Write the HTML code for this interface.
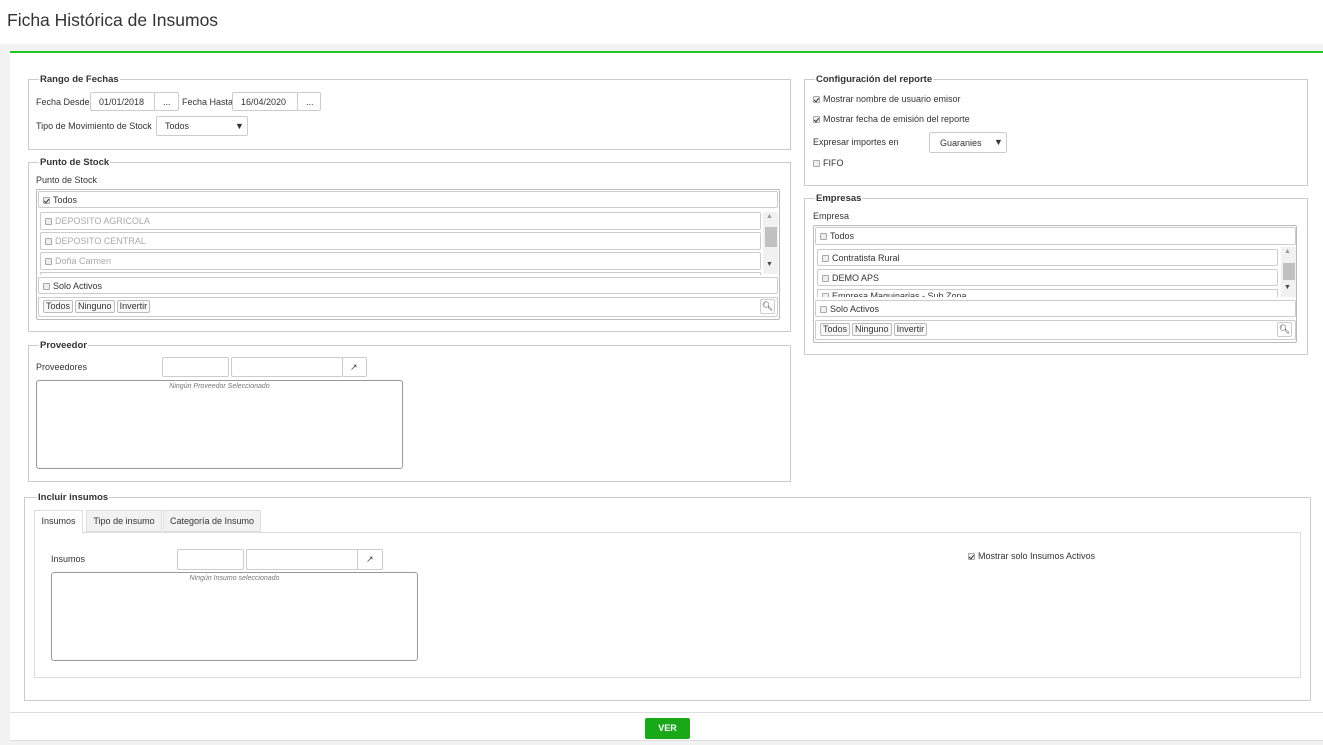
<!DOCTYPE html>
<html><head><meta charset="utf-8"><style>
*{box-sizing:border-box;margin:0;padding:0}
body{width:1323px;height:745px;background:#fff;font-family:"Liberation Sans",sans-serif;font-size:9px;color:#333;position:relative;overflow:hidden}
.a{position:absolute}
.fs{position:absolute;border:1px solid #ccc}
.lg{position:absolute;top:-6px;left:10px;background:#fff;font-weight:bold;font-size:9.5px;color:#333;padding:0 1px;line-height:11px}
.in{position:absolute;border:1px solid #ccc;border-radius:2px;background:#fff;font-size:9px;display:flex;align-items:center;padding-left:8px}
.cb{display:inline-block;width:7px;height:7px;border:1px solid #aaa;background:#eee;border-radius:1px;vertical-align:-1px;margin-right:3px;position:relative}
.cb.k::after{content:"";position:absolute;left:1px;top:0px;width:2px;height:4px;border:solid #333;border-width:0 1.3px 1.3px 0;transform:rotate(40deg)}
.row{position:absolute;border:1px solid #ccc;border-radius:2px;background:#fff;line-height:16px;padding-left:4px;font-size:9px}
.g{color:#aaa}
.btn{display:inline-block;border:1px solid #bbb;border-radius:2px;padding:0 2px;line-height:11px;margin-right:2px;font-size:9px;background:#f8f8f8}
</style></head><body>
<div class="a" style="left:7px;top:10px;font-size:17.5px;color:#333">Ficha Histórica de Insumos</div>
<div class="a" style="left:0;top:44px;width:1323px;height:701px;background:#f2f2f2"></div>
<div class="a" style="left:10px;top:51px;width:1313px;height:661px;background:#fff;border-top:2px solid #22c622"></div>
<div class="a" style="left:10px;top:712px;width:1313px;height:1px;background:#ddd"></div>
<div class="a" style="left:10px;top:713px;width:1313px;height:28px;background:#fff;border-bottom:1px solid #ddd"></div>
<div class="a" style="left:645px;top:718px;width:45px;height:21px;background:#18a818;border-radius:2px;color:#fff;font-weight:bold;text-align:center;line-height:21px;font-size:9px">VER</div>

<div class="fs" style="left:28px;top:79px;width:763px;height:71px"><div class="lg">Rango de Fechas</div></div>
<div class="a" style="left:36px;top:97px">Fecha Desde</div>
<div class="in" style="left:90px;top:92px;width:65px;height:19px">01/01/2018</div>
<div class="in" style="left:154px;top:92px;width:25px;height:19px">...</div>
<div class="a" style="left:182px;top:97px">Fecha Hasta</div>
<div class="in" style="left:232px;top:92px;width:66px;height:19px">16/04/2020</div>
<div class="in" style="left:297px;top:92px;width:24px;height:19px">...</div>
<div class="a" style="left:36px;top:121px">Tipo de Movimiento de Stock</div>
<div class="in" style="left:156px;top:116px;width:92px;height:20px">Todos<span class="a" style="left:78px;top:4px">▼</span></div>

<div class="fs" style="left:28px;top:162px;width:763px;height:170px"><div class="lg">Punto de Stock</div></div>
<div class="a" style="left:36px;top:175px">Punto de Stock</div>
<div class="a" style="left:36px;top:189px;width:744px;height:131px;border:1px solid #bbb;border-radius:2px"></div>
<div class="row" style="left:38px;top:191px;width:740px;height:17px"><span class="cb k"></span>Todos</div>
<div class="row g" style="left:40px;top:212px;width:721px;height:18px"><span class="cb"></span>DEPOSITO AGRICOLA</div>
<div class="row g" style="left:40px;top:232px;width:721px;height:18px"><span class="cb"></span>DEPOSITO CENTRAL</div>
<div class="row g" style="left:40px;top:252px;width:721px;height:18px"><span class="cb"></span>Doña Carmen</div>
<div class="a" style="left:40px;top:272px;width:721px;height:3px;border:1px solid #ccc;border-bottom:none"></div>
<div class="a" style="left:763px;top:212px;width:15px;height:62px;background:#f1f1f1"></div>
<div class="a" style="left:766px;top:213px;font-size:7px;color:#999">▲</div>
<div class="a" style="left:765px;top:227px;width:12px;height:20px;background:#c1c1c1"></div>
<div class="a" style="left:766px;top:261px;font-size:7px;color:#444">▼</div>
<div class="row" style="left:38px;top:277px;width:740px;height:17px"><span class="cb"></span>Solo Activos</div>
<div class="row" style="left:38px;top:297px;width:740px;height:20px;padding-top:2px;line-height:12px"><span class="btn">Todos</span><span class="btn">Ninguno</span><span class="btn">Invertir</span></div>
<div class="a" style="left:760px;top:299px;width:15px;height:15px;border:1px solid #ccc;border-radius:2px;text-align:center;font-size:9px;line-height:13px">&#x1F50D;&#xFE0E;</div>

<div class="fs" style="left:28px;top:345px;width:763px;height:137px"><div class="lg">Proveedor</div></div>
<div class="a" style="left:36px;top:362px">Proveedores</div>
<div class="in" style="left:162px;top:357px;width:67px;height:20px"></div>
<div class="in" style="left:231px;top:357px;width:112px;height:20px"></div>
<div class="in" style="left:342px;top:357px;width:25px;height:20px;padding-left:7px;color:#444">↗</div>
<div class="a" style="left:36px;top:380px;width:367px;height:89px;border:1px solid #999;border-radius:3px"></div>
<div class="a" style="left:36px;top:383px;width:367px;text-align:center;font-size:7px;font-style:italic;color:#777">Ningún Proveedor Seleccionado</div>

<div class="fs" style="left:804px;top:79px;width:504px;height:107px"><div class="lg">Configuración del reporte</div></div>
<div class="a" style="left:813px;top:94px"><span class="cb k"></span>Mostrar nombre de usuario emisor</div>
<div class="a" style="left:813px;top:114px"><span class="cb k"></span>Mostrar fecha de emisión del reporte</div>
<div class="a" style="left:813px;top:137px">Expresar importes en</div>
<div class="in" style="left:929px;top:132px;width:78px;height:21px;padding-left:10px">Guaranies<span class="a" style="left:64px;top:4px">▼</span></div>
<div class="a" style="left:813px;top:158px"><span class="cb"></span>FIFO</div>

<div class="fs" style="left:804px;top:198px;width:504px;height:157px"><div class="lg">Empresas</div></div>
<div class="a" style="left:813px;top:211px">Empresa</div>
<div class="a" style="left:813px;top:225px;width:484px;height:118px;border:1px solid #bbb;border-radius:2px"></div>
<div class="row" style="left:815px;top:227px;width:481px;height:18px"><span class="cb"></span>Todos</div>
<div class="row" style="left:817px;top:249px;width:461px;height:17px"><span class="cb"></span>Contratista Rural</div>
<div class="row" style="left:817px;top:269px;width:461px;height:17px"><span class="cb"></span>DEMO APS</div>
<div class="a" style="left:817px;top:289px;width:461px;height:8px;border:1px solid #ccc;border-bottom:none;overflow:hidden;padding-left:4px;line-height:13px"><span class="cb"></span>Empresa Maquinarias - Sub Zona</div>
<div class="a" style="left:1281px;top:247px;width:15px;height:50px;background:#f1f1f1"></div>
<div class="a" style="left:1284px;top:248px;font-size:7px;color:#999">▲</div>
<div class="a" style="left:1283px;top:263px;width:12px;height:17px;background:#c1c1c1"></div>
<div class="a" style="left:1284px;top:284px;font-size:7px;color:#444">▼</div>
<div class="row" style="left:815px;top:300px;width:481px;height:17px"><span class="cb"></span>Solo Activos</div>
<div class="row" style="left:815px;top:320px;width:481px;height:20px;padding-top:2px;line-height:12px"><span class="btn">Todos</span><span class="btn">Ninguno</span><span class="btn">Invertir</span></div>
<div class="a" style="left:1277px;top:322px;width:15px;height:15px;border:1px solid #ccc;border-radius:2px;text-align:center;font-size:9px;line-height:13px">&#x1F50D;&#xFE0E;</div>

<div class="fs" style="left:24px;top:497px;width:1287px;height:204px"><div class="lg" style="left:12px">Incluir insumos</div></div>
<div class="a" style="left:34px;top:532px;width:1267px;height:146px;border:1px solid #ddd"></div>
<div class="a" style="left:34px;top:510px;width:49px;height:23px;background:#fff;border:1px solid #ddd;border-bottom:none;text-align:center;line-height:21px">Insumos</div>
<div class="a" style="left:86px;top:510px;width:76px;height:22px;background:#f2f2f2;border:1px solid #ddd;text-align:center;line-height:21px">Tipo de insumo</div>
<div class="a" style="left:163px;top:510px;width:98px;height:22px;background:#f2f2f2;border:1px solid #ddd;text-align:center;line-height:21px">Categoría de Insumo</div>
<div class="a" style="left:51px;top:554px">Insumos</div>
<div class="in" style="left:177px;top:549px;width:67px;height:21px"></div>
<div class="in" style="left:246px;top:549px;width:112px;height:21px"></div>
<div class="in" style="left:357px;top:549px;width:26px;height:21px;padding-left:8px;color:#444">↗</div>
<div class="a" style="left:51px;top:572px;width:367px;height:89px;border:1px solid #999;border-radius:3px"></div>
<div class="a" style="left:51px;top:575px;width:367px;text-align:center;font-size:7px;font-style:italic;color:#777">Ningún Insumo seleccionado</div>
<div class="a" style="left:968px;top:551px"><span class="cb k"></span>Mostrar solo Insumos Activos</div>
</body></html>
